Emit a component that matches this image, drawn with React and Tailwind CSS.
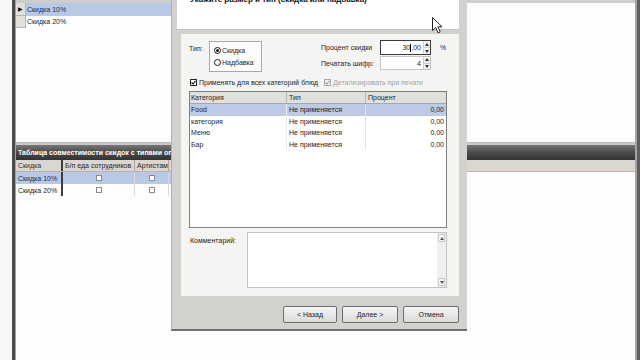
import React from "react";

const topRows = [
  { name: "Скидка 10%", selected: true },
  { name: "Скидка 20%", selected: false },
];

const categories = [
  { name: "Food", type: "Не применяется", value: "0,00", selected: true },
  { name: "категория", type: "Не применяется", value: "0,00" },
  { name: "Меню", type: "Не применяется", value: "0,00" },
  { name: "Бар", type: "Не применяется", value: "0,00" },
];

function Check({ disabled }) {
  return (
    <span className={`w-[7px] h-[7px] border flex items-center justify-center ${disabled ? "border-[#a8a8a8] bg-[#f0f0f0]" : "border-[#2a2a2a] bg-white"}`}>
      <svg width="5" height="5" viewBox="0 0 5 5">
        <path d="M0.5 2.5 L2 4 L4.5 0.8" fill="none" stroke={disabled ? "#a0a0a0" : "#111"} strokeWidth="1.1" />
      </svg>
    </span>
  );
}

function Radio({ checked, label }) {
  return (
    <div className="flex items-center h-[12px] gap-[1px]">
      <span className="w-[7px] h-[7px] rounded-full border-[1.5px] border-[#1a1a1a] bg-white flex items-center justify-center">
        {checked && <span className="w-[3px] h-[3px] rounded-full bg-[#1a1a1a]" />}
      </span>
      <span>{label}</span>
    </div>
  );
}

function Spinner() {
  return (
    <div className="w-[7px] flex flex-col border-l border-[#d0d0d0] bg-[#f2f2f2]">
      <div className="flex-1 flex items-center justify-center border-b border-[#d0d0d0]">
        <svg width="4" height="3" viewBox="0 0 4 3"><path d="M0 3 L2 0 L4 3 Z" fill="#333" /></svg>
      </div>
      <div className="flex-1 flex items-center justify-center">
        <svg width="4" height="3" viewBox="0 0 4 3"><path d="M0 0 L2 3 L4 0 Z" fill="#333" /></svg>
      </div>
    </div>
  );
}

function SmallBox() {
  return <span className="w-[6px] h-[6px] border border-[#8a8a8a] bg-white" />;
}

export default function App() {
  return (
    <div className="relative w-[640px] h-[360px] overflow-hidden flex bg-white text-[7px] leading-none whitespace-nowrap text-[#1e1e1e] font-['Liberation_Sans',Arial,sans-serif]">
      {/* desktop strip + window border */}
      <div className="w-[12px] bg-[#faf7f7]" />
      <div className="w-[3px] bg-[#4b4b4b]" />
      <div className="w-[1px] bg-[#a0a0a0]" />

      <div className="flex-1 flex flex-col bg-[#fdfdfd]">
        {/* top grid: discounts */}
        <div className="h-[143px] flex flex-col">
          <div className="h-[3px] bg-[#cdcdcd]" />
          {topRows.map((r) => (
            <div key={r.name} className="flex h-[12.5px]">
              <div className="w-[10px] bg-[#e3e0dc] border-r border-b border-[#b4b4b4] flex items-center justify-center">
                {r.selected && <span className="text-[6px] text-black">▶</span>}
              </div>
              <div className={`w-[330px] flex items-center pl-[1px] ${r.selected ? "bg-[#b9c8e5] text-[#1b2c55]" : ""}`}>{r.name}</div>
            </div>
          ))}
          <div className="flex-1" />
          <div className="h-[1px] bg-[#b8b8b8]" />
        </div>

        {/* bottom grid: compatibility */}
        <div className="flex-1 flex flex-col">
          <div className="h-[2px] bg-[#cacaca]" />
          <div className="h-[15px] bg-gradient-to-b from-[#777] via-[#4a4a4a] to-[#333] flex items-center pl-[2px] text-white font-bold text-[7px]">
            Таблица совместимости скидок с типами оплат
          </div>
          <div className="flex h-[12px] bg-[#dcd6d0] border-b border-[#b9b3ad]">
            <div className="w-[45px] flex items-center pl-[2px] text-[#333]">Скидка</div>
            <div className="w-[2px] bg-[#3d3d3d]" />
            <div className="w-[72px] flex items-center pl-[2px] border-r border-[#aaa49e]">Б/п еда сотрудников</div>
            <div className="w-[34px] flex items-center pl-[2px] border-r border-[#aaa49e]">Артистам</div>
            <div className="flex-1" />
          </div>
          {topRows.map((r) => (
            <div key={r.name} className="flex h-[12px]">
              <div className={`w-[45px] flex items-center pl-[2px] ${r.selected ? "bg-[#b9c8e5] text-[#1b2c55]" : ""}`}>{r.name}</div>
              <div className="w-[2px] bg-[#3d3d3d]" />
              <div className={`w-[72px] flex items-center justify-center border-r border-[#d8d8d8] ${r.selected ? "bg-[#b9c8e5]" : ""}`}>
                <SmallBox />
              </div>
              <div className={`w-[34px] flex items-center justify-center border-r border-[#d8d8d8] ${r.selected ? "bg-[#b9c8e5]" : ""}`}>
                <SmallBox />
              </div>
              <div className={`w-[250px] ${r.selected ? "bg-[#b9c8e5]" : ""}`} />
            </div>
          ))}
          <div className="flex-1" />
        </div>
      </div>

      <div className="w-[2px] bg-[#a4a4a4]" />
      <div className="w-[3px] bg-[#5e5e5e]" />

      {/* wizard dialog */}
      <div className="absolute left-[171px] top-0 w-[296px] h-[331px] flex flex-col bg-[#d3d1cd] border-l border-[#b0b0b0] border-b-2 border-b-[#6f6f6f] pl-[5px] pr-[8px]">
        <div className="h-[30px] bg-white border-b border-[#c4c4c4] overflow-hidden">
          <div className="-mt-[4px] pl-[13px] font-bold text-[8px] text-[#111]">Укажите размер и тип (скидка или надбавка)</div>
        </div>

        <div className="mt-[4px] ml-[4px] h-[262px] bg-[#f4f4f3] flex flex-col pl-[8px] pr-[12px]">
          {/* type + values */}
          <div className="flex mt-[7px]">
            <div className="w-[20px] pt-[4px]">Тип:</div>
            <div className="w-[53px] h-[31px] border border-[#a9a9a9] bg-[#fbfbfb] flex flex-col justify-center pl-[4px]">
              <Radio checked label="Скидка" />
              <Radio label="Надбавка" />
            </div>
            <div className="ml-[59px] -mt-[1px] flex flex-col gap-[1px]">
              <div className="flex items-center h-[15px]">
                <div className="w-[59px]">Процент скидки</div>
                <div className="w-[51px] h-[15px] border border-[#3a3a3a] bg-white flex">
                  <div className="flex-1 flex items-center justify-end pr-[2px]">
                    30<span className="w-[1px] h-[8px] bg-black" />,00
                  </div>
                  <Spinner />
                </div>
                <div className="ml-[9px]">%</div>
              </div>
              <div className="flex items-center h-[14px]">
                <div className="w-[59px]">Печатать шифр:</div>
                <div className="w-[51px] h-[14px] border border-[#c4c4c4] bg-white flex">
                  <div className="flex-1 flex items-center justify-end pr-[2px]">4</div>
                  <Spinner />
                </div>
              </div>
            </div>
          </div>

          {/* options */}
          <div className="flex items-center h-[9px] mt-[6px] pl-[1px]">
            <Check />
            <span className="ml-[2px] w-[125px]">Применять для всех категорий блюд</span>
            <span className="flex items-center">
              <Check disabled />
              <span className="ml-[2px] text-[#a3a3a3]">Детализировать при печати</span>
            </span>
          </div>

          {/* categories grid */}
          <div className="mt-[4px] h-[137px] border border-[#7d7d7d] bg-white flex flex-col">
            <div className="flex h-[12px] bg-[#e2e0dc] border-b border-[#a9a7a3]">
              <div className="w-[97px] flex items-center pl-[1px] border-r border-[#b9b7b3]">Категория</div>
              <div className="w-[79px] flex items-center pl-[2px] border-r border-[#b9b7b3]">Тип</div>
              <div className="flex-1 flex items-center pl-[2px]">Процент</div>
            </div>
            {categories.map((c) => (
              <div key={c.name} className={`flex h-[11.6px] ${c.selected ? "bg-[#bccae6]" : ""}`}>
                <div className="w-[97px] flex items-center pl-[1px] border-r border-[#ececec]">{c.name}</div>
                <div className="w-[79px] flex items-center pl-[2px] border-r border-[#e4e4e4]">{c.type}</div>
                <div className="flex-1 flex items-center justify-end pr-[2px]">{c.value}</div>
              </div>
            ))}
          </div>

          {/* comment */}
          <div className="flex mt-[4px]">
            <div className="w-[58px] pl-[1px] pt-[5px]">Комментарий:</div>
            <div className="w-[200px] h-[56px] border border-[#c2c2c2] bg-white flex justify-end">
              <div className="w-[9px] bg-[#efefef] flex flex-col justify-between py-[1px] items-center">
                <div className="w-[7px] h-[8px] border border-[#c8c8c8] bg-[#f6f6f6] flex items-center justify-center">
                  <svg width="4" height="3" viewBox="0 0 4 3"><path d="M0 3 L2 0 L4 3 Z" fill="#555" /></svg>
                </div>
                <div className="w-[7px] h-[8px] border border-[#c8c8c8] bg-[#f6f6f6] flex items-center justify-center">
                  <svg width="4" height="3" viewBox="0 0 4 3"><path d="M0 0 L2 3 L4 0 Z" fill="#555" /></svg>
                </div>
              </div>
            </div>
          </div>
        </div>

        {/* buttons */}
        <div className="flex justify-end gap-[5px] mt-[10px]">
          <button className="w-[54px] h-[17px] border border-[#6e6e6e] rounded-[2px] bg-gradient-to-b from-[#f6f6f6] to-[#dadada] text-[7px]">&lt; Назад</button>
          <button className="w-[56px] h-[17px] border border-[#6e6e6e] rounded-[2px] bg-gradient-to-b from-[#f6f6f6] to-[#dadada] text-[7px]">Далее &gt;</button>
          <button className="w-[56px] h-[17px] border border-[#6e6e6e] rounded-[2px] bg-gradient-to-b from-[#f6f6f6] to-[#dadada] text-[7px]">Отмена</button>
        </div>
      </div>

      {/* mouse pointer */}
      <svg className="absolute left-[432px] top-[17px]" width="12" height="17" viewBox="0 0 12 17">
        <path d="M0.5 0.5 L0.5 13.5 L3.7 10.6 L6 15.8 L8.2 14.8 L5.9 9.8 L10 9.8 Z" fill="#fff" stroke="#222" strokeWidth="1" strokeLinejoin="round" />
      </svg>
    </div>
  );
}
